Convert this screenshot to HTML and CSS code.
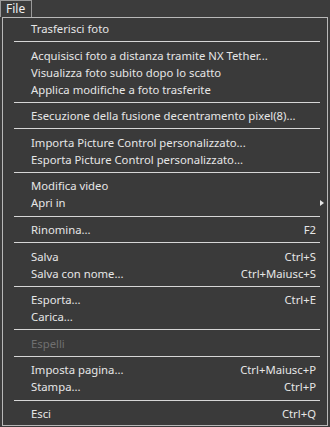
FILE: index.html
```html
<!DOCTYPE html>
<html lang="it">
<head>
    <meta charset="UTF-8">
    <title>File</title>
    <link rel="stylesheet" href="styles.css">
</head>
<body>
    <div class="menubar">
        <div class="menubar-item open">File</div>
    </div>
    <div class="menu">
        <div class="item"><span>Trasferisci foto</span></div>
        <div class="sep"></div>
        <div class="item"><span>Acquisisci foto a distanza tramite NX Tether...</span></div>
        <div class="item"><span>Visualizza foto subito dopo lo scatto</span></div>
        <div class="item"><span>Applica modifiche a foto trasferite</span></div>
        <div class="sep"></div>
        <div class="item"><span>Esecuzione della fusione decentramento pixel(8)...</span></div>
        <div class="sep"></div>
        <div class="item"><span>Importa Picture Control personalizzato...</span></div>
        <div class="item"><span>Esporta Picture Control personalizzato...</span></div>
        <div class="sep"></div>
        <div class="item"><span>Modifica video</span></div>
        <div class="item"><span>Apri in</span><span class="arrow"></span></div>
        <div class="sep"></div>
        <div class="item"><span>Rinomina...</span><span class="key">F2</span></div>
        <div class="sep"></div>
        <div class="item"><span>Salva</span><span class="key">Ctrl+S</span></div>
        <div class="item"><span>Salva con nome...</span><span class="key">Ctrl+Maiusc+S</span></div>
        <div class="sep"></div>
        <div class="item"><span>Esporta...</span><span class="key">Ctrl+E</span></div>
        <div class="item"><span>Carica...</span></div>
        <div class="sep"></div>
        <div class="item disabled"><span>Espelli</span></div>
        <div class="sep"></div>
        <div class="item"><span>Imposta pagina...</span><span class="key">Ctrl+Maiusc+P</span></div>
        <div class="item"><span>Stampa...</span><span class="key">Ctrl+P</span></div>
        <div class="sep"></div>
        <div class="item"><span>Esci</span><span class="key">Ctrl+Q</span></div>
    </div>
</body>
</html>
```

FILE: styles.css
```css
body {
    margin: 0;
    background-color: #3c3c3c;
    font-family: "Noto Sans", "Open Sans", sans-serif;
    font-size: 11.3px;
    color: #e6e6e6;
    height: 427px;
    overflow: hidden;
}
.menubar {
    height: 17px;
    display: flex;
}
.menubar-item {
    box-sizing: border-box;
    width: 32px;
    height: 17px;
    line-height: 15px;
    padding-left: 5px;
    font-size: 12px;
    border: 1px solid #9a9a9a;
    border-bottom: none;
    color: #f0f0f0;
}
.menu {
    box-sizing: border-box;
    margin-left: 2px;
    width: 326px;
    height: 409px;
    border: 1px solid #b8b8b8;
    background-color: #3a3a3a;
    padding-top: 2px;
}
.item {
    height: 17px;
    line-height: 17px;
    display: flex;
    justify-content: space-between;
    align-items: center;
    padding-left: 28px;
    padding-right: 11px;
    white-space: nowrap;
}
.item.disabled {
    color: #707070;
}
.key {
    color: #e6e6e6;
}
.arrow {
    width: 0;
    height: 0;
    margin-right: -8px;
    border-top: 3px solid transparent;
    border-bottom: 3px solid transparent;
    border-left: 4px solid #e6e6e6;
}
.sep {
    height: 9.6px;
    display: flex;
    align-items: center;
    padding: 0 7px 0 11px;
}
.sep::before {
    content: "";
    flex: 1;
    height: 1px;
    background-color: #d6d6d6;
}
```
